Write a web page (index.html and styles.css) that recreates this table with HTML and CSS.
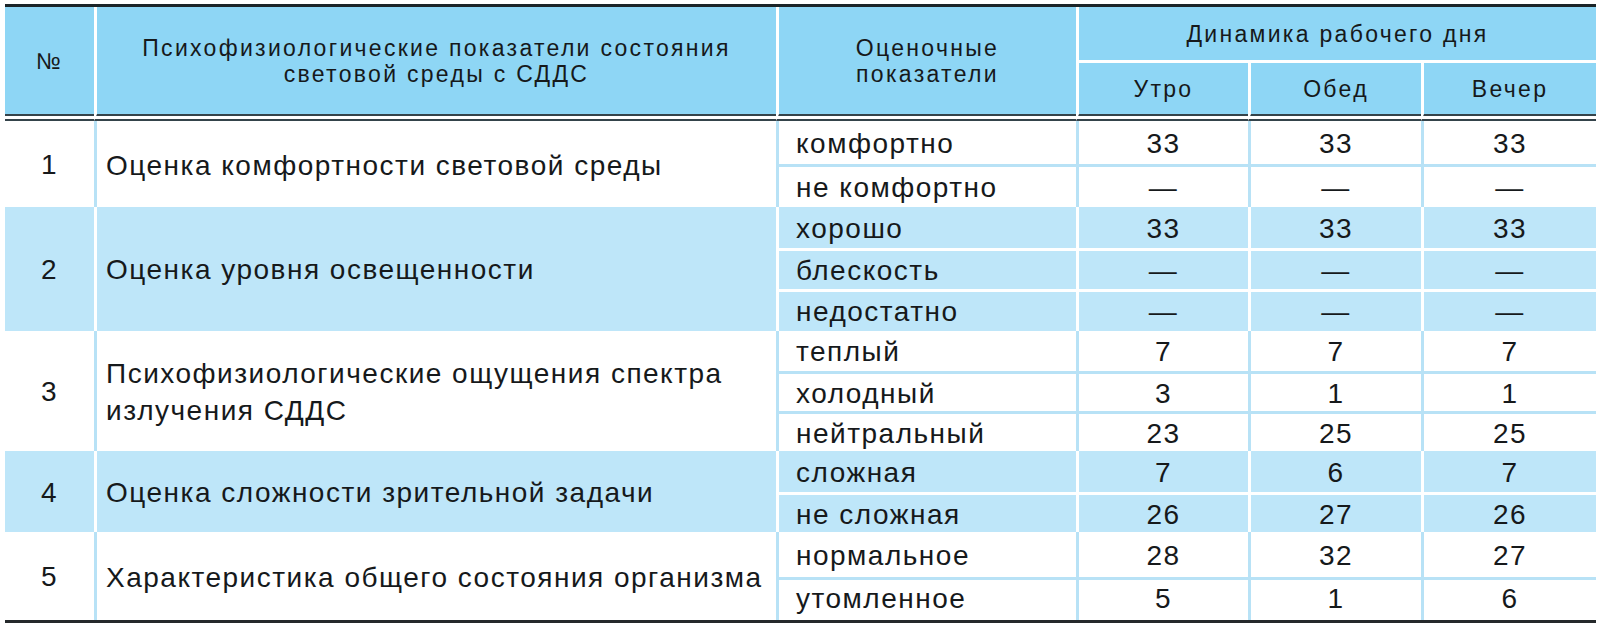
FILE: index.html
```html
<!DOCTYPE html>
<html lang="ru">
<head>
<meta charset="utf-8">
<title>Таблица</title>
<link rel="stylesheet" href="styles.css">
</head>
<body>
<table class="data">
  <colgroup>
    <col class="c-num">
    <col class="c-name">
    <col class="c-ind">
    <col class="c-t1">
    <col class="c-t2">
    <col class="c-t3">
  </colgroup>
  <thead>
    <tr class="h1">
      <th rowspan="2" class="hb first">№</th>
      <th rowspan="2" class="hb">Психофизиологические показатели состояния<br>световой среды с СДДС</th>
      <th rowspan="2" class="hb">Оценочные<br>показатели</th>
      <th colspan="3" class="dyn">Динамика рабочего дня</th>
    </tr>
    <tr class="h2">
      <th class="hb">Утро</th>
      <th class="hb">Обед</th>
      <th class="hb">Вечер</th>
    </tr>
  </thead>
  <tbody>
    <tr class="w g1">
      <td rowspan="2" class="num">1</td>
      <td rowspan="2" class="name">Оценка комфортности световой среды</td>
      <td class="ind">комфортно</td><td class="v">33</td><td class="v">33</td><td class="v">33</td>
    </tr>
    <tr class="w g1 sub">
      <td class="ind">не комфортно</td><td class="v">—</td><td class="v">—</td><td class="v">—</td>
    </tr>

    <tr class="b g2">
      <td rowspan="3" class="num">2</td>
      <td rowspan="3" class="name">Оценка уровня освещенности</td>
      <td class="ind">хорошо</td><td class="v">33</td><td class="v">33</td><td class="v">33</td>
    </tr>
    <tr class="b g2 sub">
      <td class="ind">блескость</td><td class="v">—</td><td class="v">—</td><td class="v">—</td>
    </tr>
    <tr class="b g2 sub">
      <td class="ind">недостатно</td><td class="v">—</td><td class="v">—</td><td class="v">—</td>
    </tr>

    <tr class="w g3">
      <td rowspan="3" class="num">3</td>
      <td rowspan="3" class="name">Психофизиологические ощущения спектра<br>излучения СДДС</td>
      <td class="ind">теплый</td><td class="v">7</td><td class="v">7</td><td class="v">7</td>
    </tr>
    <tr class="w g3 sub">
      <td class="ind">холодный</td><td class="v">3</td><td class="v">1</td><td class="v">1</td>
    </tr>
    <tr class="w g3 sub">
      <td class="ind">нейтральный</td><td class="v">23</td><td class="v">25</td><td class="v">25</td>
    </tr>

    <tr class="b g4">
      <td rowspan="2" class="num">4</td>
      <td rowspan="2" class="name">Оценка сложности зрительной задачи</td>
      <td class="ind">сложная</td><td class="v">7</td><td class="v">6</td><td class="v">7</td>
    </tr>
    <tr class="b g4 sub">
      <td class="ind">не сложная</td><td class="v">26</td><td class="v">27</td><td class="v">26</td>
    </tr>

    <tr class="w g5">
      <td rowspan="2" class="num">5</td>
      <td rowspan="2" class="name">Характеристика общего состояния организма</td>
      <td class="ind">нормальное</td><td class="v">28</td><td class="v">32</td><td class="v">27</td>
    </tr>
    <tr class="w g5 sub last">
      <td class="ind">утомленное</td><td class="v">5</td><td class="v">1</td><td class="v">6</td>
    </tr>
  </tbody>
</table>
</body>
</html>
```
FILE: styles.css
```css
html, body {
  margin: 0;
  padding: 0;
  background: #ffffff;
}

body {
  padding: 4px 4px 0 5px;
  font-family: "Liberation Sans", Arial, sans-serif;
  color: #16191b;
}

.data {
  width: 1591px;
  table-layout: fixed;
  border-collapse: separate;
  border-spacing: 0;
  border-top: 3px solid #1b2428;
  border-bottom: 3px solid #25292b;
}

.c-num  { width: 89px; }
.c-name { width: 682px; }
.c-ind  { width: 300px; }
.c-t1   { width: 172px; }
.c-t2   { width: 173px; }
.c-t3   { width: 175px; }

/* header */
.data th {
  background: #8ed6f5;
  background-clip: padding-box;
  font-weight: normal;
  font-size: 23px;
  letter-spacing: 2.3px;
  line-height: 26px;
  text-align: center;
  vertical-align: middle;
  padding: 0;
  border-left: 3px solid #ffffff;
}

.data th.first {
  border-left: 0;
}

.data th.hb {
  border-bottom: 7px double #34434a;
}

.data th.dyn {
  border-bottom: 3px solid #ffffff;
}

.h1 { height: 56px; }
.h2 { height: 58px; }

/* body */
.data td {
  font-size: 28px;
  letter-spacing: 1.5px;
  line-height: 34px;
  padding: 2px 0 0 0;
  vertical-align: middle;
  border-left: 3px solid transparent;
}

.data td.num {
  border-left: 0;
  text-align: center;
}

.data td.name {
  padding-left: 9px;
  line-height: 37px;
}

.data td.ind {
  padding-left: 17px;
}

.data td.v {
  text-align: center;
}

.w td {
  background: #ffffff;
  border-color: #b8e2f6;
}

.b td {
  background: #bee6f9;
  border-color: #ffffff;
}

.sub td {
  border-top: 3px solid;
}

.w.sub td { border-top-color: #b8e2f6; }
.b.sub td { border-top-color: #ffffff; }

.g1 { height: 43px; }
.g2 { height: 41.2px; }
.g3 { height: 40.3px; }
.g4 { height: 40.5px; }
.g5 { height: 45px; }
.g5.last { height: 43px; }
.last td { padding-top: 0; padding-bottom: 2px; }
```
